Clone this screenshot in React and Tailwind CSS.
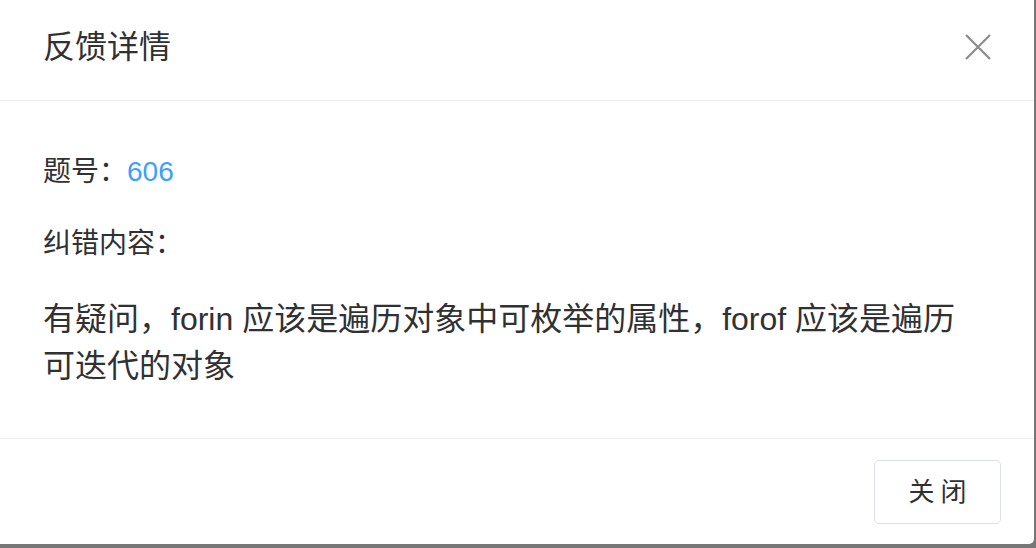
import React from "react";

export default function App() {
  const font = { fontFamily: '"Liberation Sans", "Noto Sans CJK SC", sans-serif' };
  return (
    <div className="w-[1036px] h-[548px] bg-[#777777] overflow-hidden" style={font}>
      <div className="w-[1034px] h-[544px] bg-white rounded-br-[5px] flex flex-col">
        <div className="h-[101px] shrink-0 border-b border-[#ececec] flex items-center justify-between pl-[43px] pr-[43px] pb-[6px]">
          <div className="text-[32px] leading-[40px] text-[#303133]">反馈详情</div>
          <svg width="26" height="26" viewBox="0 0 26 26" className="text-[#8c8c8c]">
            <path d="M1 1 L25 25 M25 1 L1 25" stroke="currentColor" strokeWidth="2.2" />
          </svg>
        </div>
        <div className="h-[338px] shrink-0 border-b border-[#ececec] pl-[43px] pr-[60px] pt-[51px] text-[#303133]">
          <div className="text-[28px] leading-[40px]">
            题号：<span className="text-[#409eff]">606</span>
          </div>
          <div className="text-[28px] leading-[40px] mt-[32px]">纠错内容：</div>
          <div className="text-[32px] leading-[47px] mt-[32px]">
            有疑问，forin 应该是遍历对象中可枚举的属性，forof 应该是遍历可迭代的对象
          </div>
        </div>
        <div className="flex-1 flex justify-end items-start pt-[21px] pr-[33px]">
          <button className="w-[127px] h-[64px] border border-[#dcdfe6] rounded-[5px] bg-white text-[26px] text-[#303133] tracking-[6px] pl-[6px]">
            关闭
          </button>
        </div>
      </div>
    </div>
  );
}
